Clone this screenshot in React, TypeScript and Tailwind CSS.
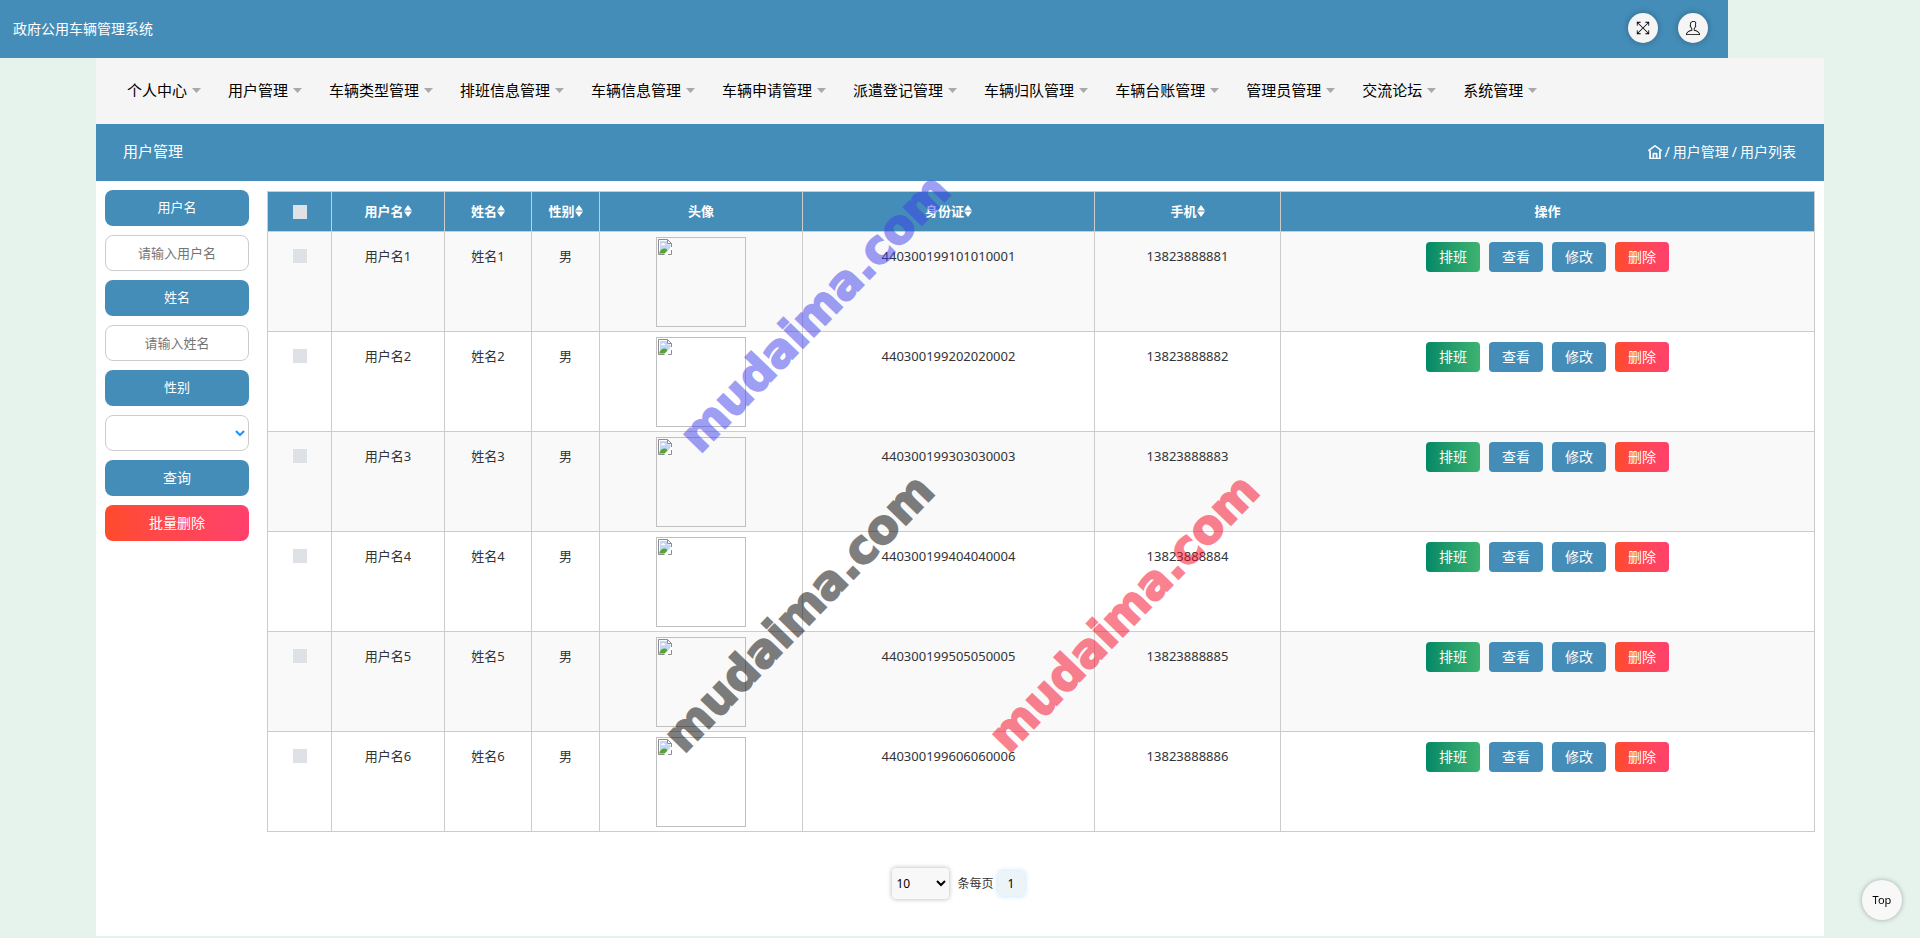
import { useState } from 'react';
import { TfiFullscreen, TfiHome, TfiUser } from 'react-icons/tfi';

const menus = [
  '个人中心',
  '用户管理',
  '车辆类型管理',
  '排班信息管理',
  '车辆信息管理',
  '车辆申请管理',
  '派遣登记管理',
  '车辆归队管理',
  '车辆台账管理',
  '管理员管理',
  '交流论坛',
  '系统管理',
];

const users = [
  { id: 1, username: '用户名1', name: '姓名1', sex: '男', idCard: '440300199101010001', phone: '13823888881' },
  { id: 2, username: '用户名2', name: '姓名2', sex: '男', idCard: '440300199202020002', phone: '13823888882' },
  { id: 3, username: '用户名3', name: '姓名3', sex: '男', idCard: '440300199303030003', phone: '13823888883' },
  { id: 4, username: '用户名4', name: '姓名4', sex: '男', idCard: '440300199404040004', phone: '13823888884' },
  { id: 5, username: '用户名5', name: '姓名5', sex: '男', idCard: '440300199505050005', phone: '13823888885' },
  { id: 6, username: '用户名6', name: '姓名6', sex: '男', idCard: '440300199606060006', phone: '13823888886' },
];

const columns = [
  { title: '用户名', width: 'w-[113px]', sortable: true },
  { title: '姓名', width: 'w-[87px]', sortable: true },
  { title: '性别', width: 'w-[68px]', sortable: true },
  { title: '头像', width: 'w-[203px]', sortable: false },
  { title: '身份证', width: 'w-[292px]', sortable: true },
  { title: '手机', width: 'w-[186px]', sortable: true },
  { title: '操作', width: '', sortable: false },
];

const actions = [
  { label: '排班', color: 'bg-linear-to-r from-[#008966] to-[#3cb371]' },
  { label: '查看', color: 'bg-[#448db8]' },
  { label: '修改', color: 'bg-[#448db8]' },
  { label: '删除', color: 'bg-linear-to-r from-[#ff4b2b] to-[#ff416c]' },
];

const watermarks = [
  'left-[815px] top-[313px] text-[#3e40eb]',
  'left-[799px] top-[613px] text-black',
  'left-[1124px] top-[613px] text-[#f70723]',
];

const SortIcon = () => (
  <svg viewBox="0 0 8 12" className="h-3 w-2" fill="currentColor" aria-hidden="true">
    <path d="M4 0 8 5.500H0zM4 12 0 6.500h8z" />
  </svg>
);

// Placeholder frame for a user without a picture
const Avatar = () => (
  <div className="mx-auto h-[90px] w-[90px] border border-[#c0c0c0] p-px">
    <svg viewBox="0 0 14 16" className="h-4 w-[14px]" aria-hidden="true">
      <path d="M0.5 0.5h9l4 4v11h-13z" fill="#fff" />
      <path d="M2 2h7v3.500h3.500V9L7 14.500H2z" fill="#c4d5f5" />
      <path d="M3 5.500c0-1 1-1 1.300-.8.500-1 2-.8 2.200.2 1 0 1 1.300 0 1.300H3.600c-.6 0-.8-.5-.6-.7z" fill="#fff" />
      <path d="M1 14.500c1-4 4.500-6 7.500-4.500l1 1.500-3 3z" fill="#55a630" />
      <path d="M6.500 15.500H0.500V0.500h9l4 4V8M9.500 0.500v4h4M13.500 11v4.500H10" fill="none" stroke="#8d8d8d" />
      <path d="M13.500 9 7.500 15" stroke="#fff" strokeWidth="1.500" />
    </svg>
  </div>
);

const FieldLabel = ({ id, children }: { id: string; children: string }) => (
  <label htmlFor={id} className="flex h-9 items-center justify-center rounded-lg bg-[#448db8] text-[13px] text-white">
    {children}
  </label>
);

const Header = () => (
  <header className="flex h-[58px] w-[90%] items-center justify-between bg-[#448db8] pr-5 pl-[13px]">
    <h1 className="text-sm text-white">政府公用车辆管理系统</h1>
    <div className="flex gap-5 pb-0.5">
      <button aria-label="全屏" className="flex size-[30px] items-center justify-center rounded-full bg-[#f5f5f5] text-black shadow-[0_0_6px_rgba(0,0,0,0.3)]">
        <TfiFullscreen size={14} />
      </button>
      <button aria-label="个人信息" className="flex size-[30px] items-center justify-center rounded-full bg-[#f5f5f5] text-black shadow-[0_0_6px_rgba(0,0,0,0.3)]">
        <TfiUser size={14} />
      </button>
    </div>
  </header>
);

const Navigation = () => (
  <nav className="flex h-[66px] items-center gap-[27px] bg-[#f5f5f5] pb-0.5 pl-[31px]">
    {menus.map((menu) => (
      <a key={menu} href="#" className="flex items-center gap-[5px] text-[15px] whitespace-nowrap text-black">
        {menu}
        <svg viewBox="0 0 9 5" className="h-[5px] w-[9px]" fill="#a9a9a9" aria-hidden="true">
          <path d="M0 0h9L4.500 5z" />
        </svg>
      </a>
    ))}
  </nav>
);

const SearchForm = () => {
  const [username, setUsername] = useState('');
  const [name, setName] = useState('');

  return (
    <form className="mt-[9px] flex w-36 shrink-0 flex-col gap-[9px]" onSubmit={(e) => e.preventDefault()}>
      <FieldLabel id="username">用户名</FieldLabel>
      <input
        id="username"
        value={username}
        onChange={(e) => setUsername(e.target.value)}
        placeholder="请输入用户名"
        className="h-9 w-full rounded-lg border border-[#ccc] bg-white text-center text-[13px] placeholder:text-[#757575]"
      />
      <FieldLabel id="name">姓名</FieldLabel>
      <input
        id="name"
        value={name}
        onChange={(e) => setName(e.target.value)}
        placeholder="请输入姓名"
        className="h-9 w-full rounded-lg border border-[#ccc] bg-white text-center text-[13px] placeholder:text-[#757575]"
      />
      <FieldLabel id="sex">性别</FieldLabel>
      <select id="sex" className="h-9 w-full rounded-lg border border-[#ccc] bg-white text-[13px] text-[#1e90ff]">
        <option value=""></option>
        <option value="男">男</option>
        <option value="女">女</option>
      </select>
      <button type="submit" className="h-9 rounded-lg bg-[#448db8] text-sm text-white">
        查询
      </button>
      <button type="button" className="h-9 rounded-lg bg-linear-to-r from-[#ff4b2b] to-[#ff416c] text-sm text-white">
        批量删除
      </button>
    </form>
  );
};

const UserTable = () => (
  <table className="mt-[10px] w-full table-fixed border-collapse text-center text-[13px] leading-5 text-[#333]">
    <thead>
      <tr className="h-10 bg-[#448db8] text-white">
        <th className="w-16 border border-[#ccc]">
          <input type="checkbox" aria-label="全选" className="mx-auto block size-[14px] appearance-none bg-[#dee2e6]" />
        </th>
        {columns.map((column) => (
          <th key={column.title} className={`border border-[#ccc] pb-0.5 font-bold ${column.width}`}>
            <span className="flex items-center justify-center">
              {column.title}
              {column.sortable && <SortIcon />}
            </span>
          </th>
        ))}
      </tr>
    </thead>
    <tbody>
      {users.map((user) => (
        <tr key={user.id} className="h-[100px] align-top odd:bg-[#f9f9f9]">
          <td className="border border-[#ccc] pt-[17px]">
            <input
              type="checkbox"
              aria-label={user.username}
              className="mx-auto block size-[14px] appearance-none bg-[#dee2e6]"
            />
          </td>
          <td className="border border-[#ccc] pt-[14px]">{user.username}</td>
          <td className="border border-[#ccc] pt-[14px]">{user.name}</td>
          <td className="border border-[#ccc] pt-[14px]">{user.sex}</td>
          <td className="border border-[#ccc] pt-[5px]">
            <Avatar />
          </td>
          <td className="border border-[#ccc] pt-[14px]">{user.idCard}</td>
          <td className="border border-[#ccc] pt-[14px]">{user.phone}</td>
          <td className="border border-[#ccc] pt-[10px]">
            <div className="flex justify-center gap-[9px]">
              {actions.map((action) => (
                <button key={action.label} className={`h-[30px] w-[54px] rounded text-sm text-white ${action.color}`}>
                  {action.label}
                </button>
              ))}
            </div>
          </td>
        </tr>
      ))}
    </tbody>
  </table>
);

const Pagination = () => (
  <div className="flex items-center justify-center pt-9 pr-[3px] pb-[37px] text-xs text-[#333]">
    <select
      id="page-size"
      defaultValue="10"
      className="mr-2 h-[31px] w-[57px] rounded bg-[#f8f8f8] text-xs text-black shadow-[0_0_5px_rgba(0,0,0,0.3)]"
    >
      <option>10</option>
      <option>25</option>
      <option>50</option>
    </select>
    <label htmlFor="page-size">条每页</label>
    <button className="ml-1 h-[25px] w-[27px] rounded bg-[#edf4f8] text-black shadow-[0_0_5px_rgba(30,144,255,0.3)]">
      1
    </button>
  </div>
);

export default function App() {
  return (
    <div className="relative min-h-screen overflow-hidden bg-[#e5f3ec] font-['Noto_Sans','Noto_Sans_CJK_SC',sans-serif]">
      <Header />
      <main className="mx-auto w-[90%] bg-white">
        <Navigation />
        <div className="flex h-[57px] items-center justify-between bg-[#448db8] pr-7 pb-0.5 pl-[27px] text-white">
          <h2 className="text-[15px]">用户管理</h2>
          <div className="flex items-center gap-[3px] text-sm">
            <a href="#" aria-label="首页">
              <TfiHome size={14} className="stroke-current stroke-1" />
            </a>
            <span>/</span>
            <a href="#">用户管理</a>
            <span>/</span>
            <span>用户列表</span>
          </div>
        </div>
        <div className="flex items-start gap-[18px] px-[9px]">
          <SearchForm />
          <UserTable />
        </div>
        <Pagination />
      </main>

      <button className="fixed right-[18px] bottom-[18px] size-10 rounded-full bg-[#f8f8f8] text-[11px] text-black shadow-[0_0_5px_rgba(0,0,0,0.3)]">
        Top
      </button>

      {/* Diagonal site marks over the page */}
      {watermarks.map((mark) => (
        <span
          key={mark}
          className={`pointer-events-none absolute -translate-x-1/2 -translate-y-1/2 rotate-[-46deg] font-['DejaVu_Sans',sans-serif] text-[46px] font-bold opacity-50 [-webkit-text-stroke:2px_currentColor] ${mark}`}
        >
          mudaima.com
        </span>
      ))}
    </div>
  );
}
